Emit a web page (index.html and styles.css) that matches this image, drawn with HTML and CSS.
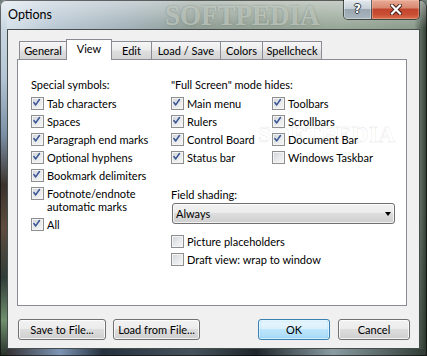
FILE: index.html
```html
<!DOCTYPE html>
<html>
<head>
<meta charset="utf-8">
<title>Options</title>
<link rel="stylesheet" href="styles.css">
</head>
<body>
<div class="window">
  <div class="titlebar">
    <span class="title">Options</span>
    <span class="glass-mark" aria-hidden="true">SOFTPEDIA</span>
    <div class="caption">
      <div class="cap help"><span>?</span></div>
      <div class="cap close">
        <svg width="12" height="11" viewBox="0 0 12 11"><path class="x-out" d="M2 1.5 L10 9.5 M10 1.5 L2 9.5"/><path class="x-in" d="M2 1.5 L10 9.5 M10 1.5 L2 9.5"/></svg>
      </div>
    </div>
  </div>
  <div class="client">
    <div class="tabs">
      <div class="tab w-general">General</div>
      <div class="tab active w-view">View</div>
      <div class="tab w-edit">Edit</div>
      <div class="tab w-load">Load / Save</div>
      <div class="tab w-colors">Colors</div>
      <div class="tab w-spell">Spellcheck</div>
    </div>
    <div class="panel">
      <span class="panel-mark" aria-hidden="true">SOFTPEDIA</span>
      <div class="col col-left">
        <div class="heading">Special symbols:</div>
        <div class="rows">
          <div class="cb"><span class="box on"><svg viewBox="0 0 13 13"><path d="M3.2 6.3 L5.4 9.2 L9.8 2.8"/></svg></span><span class="lbl">Tab characters</span></div>
          <div class="cb"><span class="box on"><svg viewBox="0 0 13 13"><path d="M3.2 6.3 L5.4 9.2 L9.8 2.8"/></svg></span><span class="lbl">Spaces</span></div>
          <div class="cb"><span class="box on"><svg viewBox="0 0 13 13"><path d="M3.2 6.3 L5.4 9.2 L9.8 2.8"/></svg></span><span class="lbl">Paragraph end marks</span></div>
          <div class="cb"><span class="box on"><svg viewBox="0 0 13 13"><path d="M3.2 6.3 L5.4 9.2 L9.8 2.8"/></svg></span><span class="lbl">Optional hyphens</span></div>
          <div class="cb"><span class="box on"><svg viewBox="0 0 13 13"><path d="M3.2 6.3 L5.4 9.2 L9.8 2.8"/></svg></span><span class="lbl">Bookmark delimiters</span></div>
          <div class="cb"><span class="box on"><svg viewBox="0 0 13 13"><path d="M3.2 6.3 L5.4 9.2 L9.8 2.8"/></svg></span><span class="lbl">Footnote/endnote<br>automatic marks</span></div>
          <div class="cb"><span class="box on"><svg viewBox="0 0 13 13"><path d="M3.2 6.3 L5.4 9.2 L9.8 2.8"/></svg></span><span class="lbl">All</span></div>
        </div>
      </div>
      <div class="col col-right">
        <div class="heading">"Full Screen" mode hides:</div>
        <div class="grid2">
          <div class="cb"><span class="box on"><svg viewBox="0 0 13 13"><path d="M3.2 6.3 L5.4 9.2 L9.8 2.8"/></svg></span><span class="lbl">Main menu</span></div>
          <div class="cb"><span class="box on"><svg viewBox="0 0 13 13"><path d="M3.2 6.3 L5.4 9.2 L9.8 2.8"/></svg></span><span class="lbl">Toolbars</span></div>
          <div class="cb"><span class="box on"><svg viewBox="0 0 13 13"><path d="M3.2 6.3 L5.4 9.2 L9.8 2.8"/></svg></span><span class="lbl">Rulers</span></div>
          <div class="cb"><span class="box on"><svg viewBox="0 0 13 13"><path d="M3.2 6.3 L5.4 9.2 L9.8 2.8"/></svg></span><span class="lbl">Scrollbars</span></div>
          <div class="cb"><span class="box on"><svg viewBox="0 0 13 13"><path d="M3.2 6.3 L5.4 9.2 L9.8 2.8"/></svg></span><span class="lbl">Control Board</span></div>
          <div class="cb"><span class="box on"><svg viewBox="0 0 13 13"><path d="M3.2 6.3 L5.4 9.2 L9.8 2.8"/></svg></span><span class="lbl">Document Bar</span></div>
          <div class="cb"><span class="box on"><svg viewBox="0 0 13 13"><path d="M3.2 6.3 L5.4 9.2 L9.8 2.8"/></svg></span><span class="lbl">Status bar</span></div>
          <div class="cb"><span class="box"></span><span class="lbl">Windows Taskbar</span></div>
        </div>
        <div class="heading field">Field shading:</div>
        <div class="select"><span>Always</span><span class="arrow"></span></div>
        <div class="cb pic"><span class="box"></span><span class="lbl">Picture placeholders</span></div>
        <div class="cb draft"><span class="box"></span><span class="lbl">Draft view: wrap to window</span></div>
      </div>
    </div>
    <div class="buttons">
      <div class="btn w-save">Save to File...</div>
      <div class="btn w-loadf">Load from File...</div>
      <div class="spacer"></div>
      <div class="btn default w-ok">OK</div>
      <div class="btn w-cancel">Cancel</div>
    </div>
  </div>
</div>
</body>
</html>
```
FILE: styles.css
```css
* { box-sizing: border-box; }
html, body { margin: 0; padding: 0; }
body {
  width: 427px;
  height: 356px;
  overflow: hidden;
  background: #6f7f78;
  font-family: Lato, "Noto Sans", sans-serif;
  font-size: 11px;
  color: #000;
}

/* ---------- window frame (Aero glass) ---------- */
.window {
  position: relative;
  width: 427px;
  height: 356px;
  display: flex;
  flex-direction: column;
  padding: 0 7px 7px 7px;
  border-radius: 6px 6px 0 0;
  overflow: hidden;
  box-shadow: inset 0 0 0 1px rgba(0, 0, 0, 0.55);
  background:
    linear-gradient(to bottom, rgba(255,255,255,0.45), rgba(255,255,255,0) 28px),
    linear-gradient(to bottom, #d6e1ea 0, #b3c5d4 22%, #7b8ea3 38%, #3b322c 52%, #5e4c3e 64%, #313c38 78%, #6f8f6d 90%, #28302a 100%) left top / 7px 100% no-repeat,
    linear-gradient(to right, #2b2522 0, #7d95b5 14%, #26313e 24%, #46535c 45%, #1f262b 60%, #8a9ca2 78%, #2f3a33 100%) left bottom / 100% 7px no-repeat,
    linear-gradient(to bottom, rgba(0,0,0,0) 0, rgba(0,0,0,0) 60%, rgba(20,30,20,0.35) 100%) right top / 7px 100% no-repeat,
    linear-gradient(to right, #dbe5ed 0%, #bccad6 12%, #a3b2ba 30%, #8f9d95 45%, #94a295 62%, #99a799 80%, #8b9b8c 97%, #2f3a30 100%);
}

.titlebar {
  height: 29px;
  flex: none;
  display: flex;
  justify-content: space-between;
  align-items: flex-start;
  position: relative;
}
.title {
  margin: 7px 0 0 1px;
  font-size: 12.5px;
  line-height: 16px;
  color: #000;
  position: relative;
  z-index: 1;
}
.glass-mark {
  position: absolute;
  left: 158px;
  top: 0;
  width: 176px;
  font-family: "Liberation Serif", serif;
  font-weight: bold;
  font-size: 27px;
  line-height: 28px;
  color: rgba(222, 230, 222, 0.55);
  text-shadow: 0 0 2px rgba(90, 100, 90, 0.5);
  white-space: nowrap;
  transform: scaleY(1.1);
  transform-origin: top left;
}

.caption {
  display: flex;
  height: 20px;
  border: 1px solid rgba(0, 0, 0, 0.6);
  border-top: none;
  border-radius: 0 0 5px 5px;
  overflow: hidden;
  position: relative;
  z-index: 1;
}
.cap {
  display: flex;
  align-items: center;
  justify-content: center;
  height: 100%;
}
.help {
  width: 28px;
  border-right: 1px solid rgba(0, 0, 0, 0.55);
  background: linear-gradient(to bottom, #e3e8ed 0%, #c7d0d8 45%, #9aa7b1 50%, #a9b6bf 100%);
  box-shadow: inset 0 0 0 1px rgba(255, 255, 255, 0.35);
}
.help span {
  font-family: "DejaVu Sans", sans-serif;
  font-weight: bold;
  font-size: 12px;
  line-height: 12px;
  color: #fff;
  margin-top: -1px;
  text-shadow: 1px 0 0 #2e3a44, -1px 0 0 #2e3a44, 0 1px 0 #2e3a44, 0 -1px 0 #2e3a44;
}
.close {
  width: 47px;
  background: linear-gradient(to bottom, #e9ab97 0%, #d98a72 40%, #c2452d 50%, #c94e33 75%, #d8704d 100%);
  box-shadow: inset 0 0 0 1px rgba(255, 210, 190, 0.35);
}
.close svg { display: block; margin-top: -1px; }
.x-out { stroke: #3a1a14; stroke-width: 4; stroke-linecap: square; fill: none; }
.x-in { stroke: #ffffff; stroke-width: 2.2; stroke-linecap: square; fill: none; }

/* ---------- client area ---------- */
.client {
  flex: 1;
  display: flex;
  flex-direction: column;
  background: #f0f0f0;
  border: 1px solid rgba(25, 35, 35, 0.8);
  padding: 9px 12px 8px 9px;
}

.tabs {
  display: flex;
  align-items: flex-end;
  height: 20px;
  margin-left: 2px;
  position: relative;
  z-index: 1;
}
.tab {
  height: 18px;
  margin-right: -1px;
  border: 1px solid #898c95;
  border-bottom: none;
  background: linear-gradient(to bottom, #f6f6f6 0%, #ececec 45%, #dedede 55%, #d4d4d4 100%);
  text-align: center;
  line-height: 17px;
  white-space: nowrap;
}
.tab.active {
  height: 21px;
  margin-bottom: -1px;
  background: #fff;
  position: relative;
  z-index: 2;
  line-height: 17px;
}
.w-general { width: 48px; }
.w-view { width: 46px; }
.w-edit { width: 41px; }
.w-load { width: 70px; }
.w-colors { width: 43px; }
.w-spell { width: 60px; }

.panel {
  position: relative;
  height: 247px;
  flex: none;
  background: #fff;
  border: 1px solid #898c95;
  display: flex;
  padding: 18px 0 0 13px;
}
.panel-mark {
  position: absolute;
  left: 240px;
  top: 61px;
  font-family: "Liberation Serif", serif;
  font-weight: bold;
  font-size: 24px;
  line-height: 26px;
  color: rgba(255, 255, 255, 0);
  -webkit-text-stroke: 1px rgba(0, 0, 0, 0.07);
  white-space: nowrap;
  pointer-events: none;
  z-index: 0;
}

.col { display: flex; flex-direction: column; position: relative; z-index: 1; }
.col-left { width: 140px; }
.col-right { width: 224px; }

.heading {
  line-height: 13px;
  white-space: nowrap;
}
.rows {
  display: flex;
  flex-direction: column;
  gap: 5px;
  margin-top: 6px;
}
.grid2 {
  display: grid;
  grid-template-columns: 101px auto;
  row-gap: 5px;
  margin-top: 6px;
}
.cb {
  display: flex;
  align-items: flex-start;
  gap: 3px;
  line-height: 13px;
  white-space: nowrap;
}
.box {
  flex: none;
  width: 13px;
  height: 13px;
  border: 1px solid #8e8f8f;
  background: linear-gradient(135deg, #cfd3d8 0%, #e6e8ea 50%, #f7f7f7 100%);
  box-shadow: inset 0 0 0 1px #f4f4f4;
  display: block;
}
.box svg {
  display: block;
  width: 11px;
  height: 11px;
}
.box path {
  fill: none;
  stroke: #3a5694;
  stroke-width: 1.8;
  stroke-linecap: round;
  stroke-linejoin: round;
  transform: translate(-1px, -1px);
}

.heading.field { margin-top: 24px; }
.select {
  margin-top: 2px;
  margin-left: 1px;
  width: 223px;
  height: 21px;
  border: 1px solid #707070;
  border-radius: 3px;
  background: linear-gradient(to bottom, #f2f2f2 0%, #ebebeb 49%, #dddddd 50%, #cfcfcf 100%);
  box-shadow: inset 0 0 0 1px rgba(255, 255, 255, 0.7);
  display: flex;
  align-items: center;
  justify-content: space-between;
  padding: 0 3px 0 3px;
  line-height: 13px;
}
.arrow {
  width: 0;
  height: 0;
  border-top: 4px solid #000;
  border-left: 3.5px solid transparent;
  border-right: 3.5px solid transparent;
  margin-top: 1px;
}
.cb.pic { margin-top: 11px; }
.cb.draft { margin-top: 5px; }

/* ---------- bottom buttons ---------- */
.buttons {
  display: flex;
  margin-top: 13px;
  margin-left: 1px;
  margin-right: -3px;
  height: 21px;
}
.spacer { flex: 1; }
.btn {
  height: 21px;
  border: 1px solid #707070;
  border-radius: 3px;
  background: linear-gradient(to bottom, #f2f2f2 0%, #ebebeb 49%, #dddddd 50%, #cfcfcf 100%);
  box-shadow: inset 0 0 0 1px rgba(255, 255, 255, 0.75);
  display: flex;
  align-items: center;
  justify-content: center;
  line-height: 13px;
  white-space: nowrap;
}
.btn.default {
  border-color: #3c7fb1;
  background: linear-gradient(to bottom, #eaf6fd 0%, #d9f0fc 49%, #bee6fd 50%, #a7d9f5 100%);
  box-shadow: inset 0 0 0 1px rgba(255, 255, 255, 0.6), inset 0 0 2px 1px rgba(72, 200, 250, 0.35);
}
.w-save { width: 88px; }
.w-loadf { width: 87px; margin-left: 7px; }
.w-ok { width: 72px; }
.w-cancel { width: 72px; margin-left: 8px; }
```
